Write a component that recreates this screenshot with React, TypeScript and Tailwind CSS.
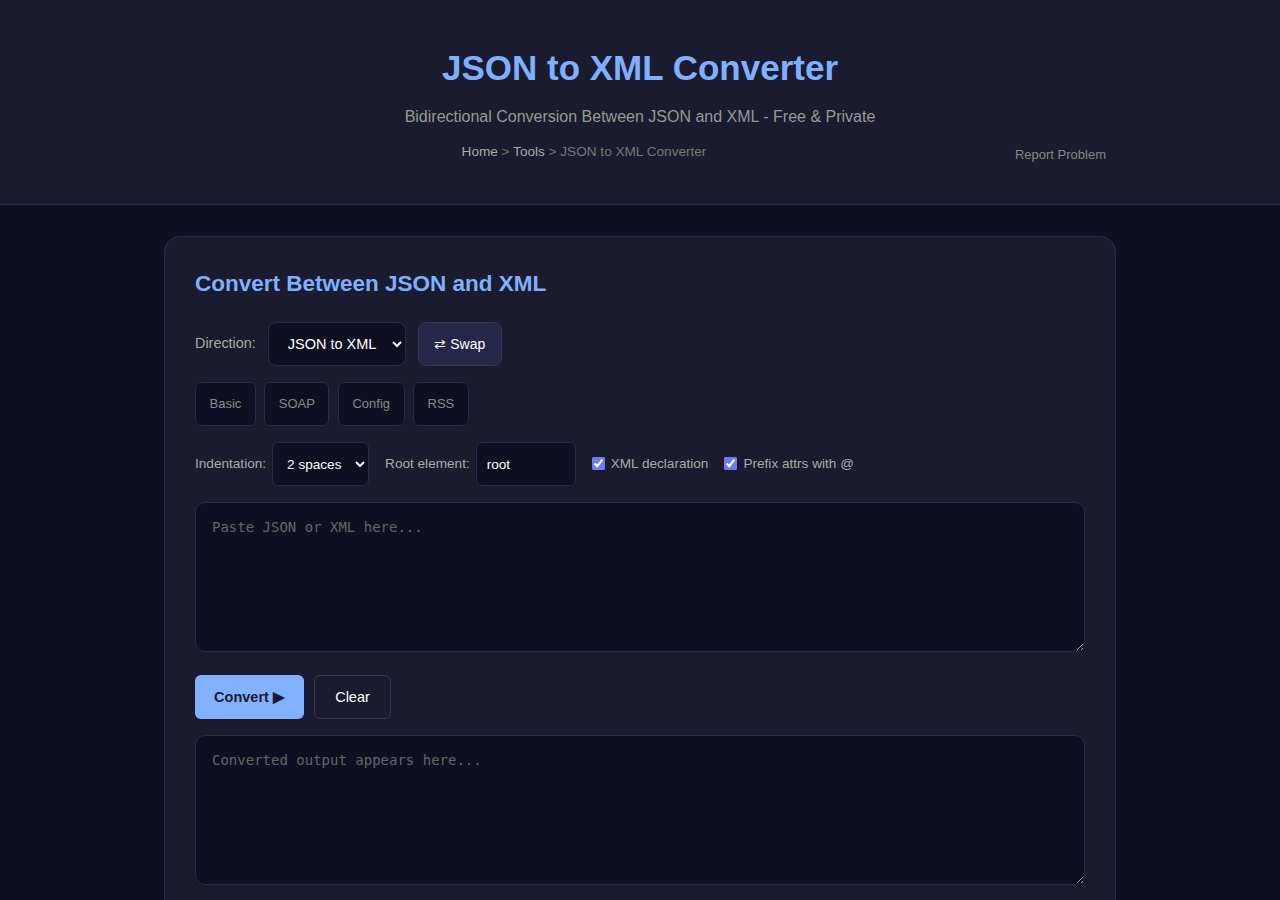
import { useState } from "react";

const presets = ["Basic", "SOAP", "Config", "RSS"];

export default function App() {
  const [direction, setDirection] = useState("json2xml");
  const [indent, setIndent] = useState("2");
  const [root, setRoot] = useState("root");
  const [decl, setDecl] = useState(true);
  const [prefix, setPrefix] = useState(true);
  const [input, setInput] = useState("");
  const [output, setOutput] = useState("");

  return (
    <div
      className="min-h-screen bg-[#0f0f23] text-[#e0e0e0]"
      style={{ fontFamily: "'Liberation Sans', Arial, sans-serif" }}
    >
      <header className="bg-[#1a1b2e] border-b border-[#2a2b4a] h-[205px] pt-[46px]">
        <div className="max-w-[952px] mx-auto text-center">
          <h1 className="text-[35px] leading-[44px] font-bold text-[#7fb0ff]">JSON to XML Converter</h1>
          <p className="mt-[17px] text-[16px] leading-[20px] text-[#999]">
            Bidirectional Conversion Between JSON and XML - Free &amp; Private
          </p>
          <div className="mt-[16px] flex items-start gap-[11px] pr-[10px]">
            <nav className="flex-1 text-center text-[13.6px] leading-[18px] text-[#777]">
              <a className="text-[#aaa]">Home</a> &gt; <a className="text-[#aaa]">Tools</a> &gt; JSON to XML Converter
            </nav>
            <a className="mt-[3px] text-[13px] leading-[18px] text-[#888]">Report Problem</a>
          </div>
        </div>
      </header>

      <main className="pt-[31px]">
        <div className="w-[952px] mx-auto bg-[#1a1b2e] border border-[#2a2b4a] rounded-[16px] px-[30px] pt-[33px] pb-[30px]">
          <h2 className="text-[22.5px] leading-[28px] font-bold text-[#7fb0ff]">Convert Between JSON and XML</h2>

          <div className="mt-[24px] flex items-start">
            <label className="text-[14.4px] text-[#aaa] pt-[11px]">Direction:</label>
            <select
              value={direction}
              onChange={(e) => setDirection(e.target.value)}
              className="ml-[12px] h-[44px] w-[138px] pl-[15px] pr-[4px] bg-[#0f0f23] border border-[#2a2b4a] rounded-[8px] text-[14.5px] text-white"
            >
              <option value="json2xml">JSON to XML</option>
              <option value="xml2json">XML to JSON</option>
            </select>
            <button
              onClick={() => setDirection(direction === "json2xml" ? "xml2json" : "json2xml")}
              className="ml-[12px] h-[44px] w-[84px] bg-[#25264a] border border-[#34365a] rounded-[8px] text-[14px] text-white"
            >
              ⇄ Swap
            </button>
          </div>

          <div className="mt-[16px] flex gap-[8.5px]">
            {presets.map((p) => (
              <button
                key={p}
                className="h-[44px] px-[13.5px] bg-[#0f0f23] border border-[#2a2b4a] rounded-[6px] text-[13px] text-[#888]"
              >
                {p}
              </button>
            ))}
          </div>

          <div className="mt-[16px] flex items-center text-[13.6px] text-[#aaa]">
            <label>Indentation:</label>
            <select
              value={indent}
              onChange={(e) => setIndent(e.target.value)}
              className="ml-[6px] h-[44px] w-[97px] pl-[10px] pr-[2px] bg-[#0f0f23] border border-[#2a2b4a] rounded-[6px] text-[13.6px] text-white"
            >
              <option value="2">2 spaces</option>
              <option value="4">4 spaces</option>
              <option value="tab">Tab</option>
            </select>
            <label className="ml-[16px]">Root element:</label>
            <input
              value={root}
              onChange={(e) => setRoot(e.target.value)}
              className="ml-[6px] h-[44px] w-[100px] px-[10px] bg-[#0f0f23] border border-[#2a2b4a] rounded-[6px] text-[13.6px] text-white outline-none"
            />
            <label className="ml-[16px] flex items-center gap-[6px]">
              <input type="checkbox" checked={decl} onChange={(e) => setDecl(e.target.checked)} className="w-[13px] h-[13px] accent-[#6b7cf0]" />
              XML declaration
            </label>
            <label className="ml-[16px] flex items-center gap-[6px]">
              <input type="checkbox" checked={prefix} onChange={(e) => setPrefix(e.target.checked)} className="w-[13px] h-[13px] accent-[#6b7cf0]" />
              Prefix attrs with @
            </label>
          </div>

          <textarea
            value={input}
            onChange={(e) => setInput(e.target.value)}
            placeholder="Paste JSON or XML here..."
            className="mt-[16px] block w-full h-[150px] px-[16px] pt-[15px] bg-[#0f0f23] border border-[#2a2b4a] rounded-[10px] text-[14px] leading-[18px] text-white placeholder:text-[#666] outline-none"
            style={{ fontFamily: "'DejaVu Sans Mono', 'Liberation Mono', monospace" }}
          />

          <div className="mt-[23px] flex gap-[10px]">
            <button
              onClick={() => setOutput(input)}
              className="h-[44px] w-[109px] pt-[2px] bg-[#82b1ff] rounded-[6px] text-[14.5px] font-bold text-[#1a1b2e]"
            >
              Convert ▶
            </button>
            <button
              onClick={() => {
                setInput("");
                setOutput("");
              }}
              className="h-[44px] w-[77px] pt-[2px] bg-[#1a1b2e] border border-[#34365a] rounded-[6px] text-[14.5px] text-white"
            >
              Clear
            </button>
          </div>

          <textarea
            value={output}
            readOnly
            placeholder="Converted output appears here..."
            className="mt-[16px] block w-full h-[150px] px-[16px] pt-[15px] bg-[#0f0f23] border border-[#2a2b4a] rounded-[10px] text-[14px] leading-[18px] text-white placeholder:text-[#666] outline-none"
            style={{ fontFamily: "'DejaVu Sans Mono', 'Liberation Mono', monospace" }}
          />
        </div>
      </main>
    </div>
  );
}
